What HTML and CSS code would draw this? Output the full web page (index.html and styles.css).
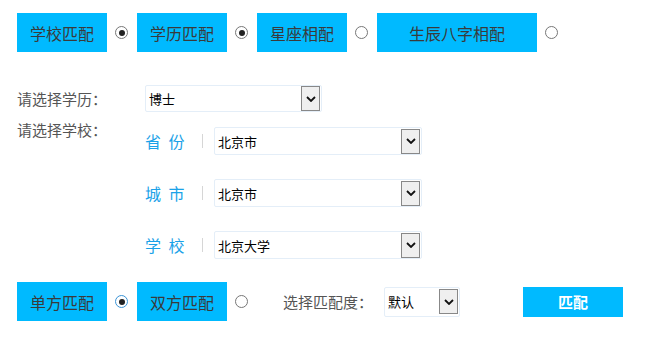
FILE: index.html
```html
<!DOCTYPE html>
<html lang="zh-CN">
<head>
    <meta charset="UTF-8">
    <title>匹配</title>
    <link rel="stylesheet" href="styles.css">
</head>
<body>
    <div class="page">
        <div class="tabs">
            <div class="tab">学校匹配</div>
            <span class="radio checked"></span>
            <div class="tab">学历匹配</div>
            <span class="radio checked"></span>
            <div class="tab">星座相配</div>
            <span class="radio"></span>
            <div class="tab tab-wide">生辰八字相配</div>
            <span class="radio"></span>
        </div>

        <div class="form-row edu-row">
            <span class="label">请选择学历：</span>
            <div class="select select-edu">
                <span class="select-text">博士</span>
                <span class="arrow"><svg viewBox="0 0 10 6"><path d="M1 1l4 4 4-4"/></svg></span>
            </div>
        </div>

        <div class="form-row school-row">
            <span class="label">请选择学校：</span>
            <div class="sub-list">
                <div class="sub-row">
                    <span class="sub-label">省 份</span>
                    <span class="divider"></span>
                    <div class="select select-wide">
                        <span class="select-text">北京市</span>
                        <span class="arrow"><svg viewBox="0 0 10 6"><path d="M1 1l4 4 4-4"/></svg></span>
                    </div>
                </div>
                <div class="sub-row">
                    <span class="sub-label">城 市</span>
                    <span class="divider"></span>
                    <div class="select select-wide">
                        <span class="select-text">北京市</span>
                        <span class="arrow"><svg viewBox="0 0 10 6"><path d="M1 1l4 4 4-4"/></svg></span>
                    </div>
                </div>
                <div class="sub-row">
                    <span class="sub-label">学 校</span>
                    <span class="divider"></span>
                    <div class="select select-wide">
                        <span class="select-text">北京大学</span>
                        <span class="arrow"><svg viewBox="0 0 10 6"><path d="M1 1l4 4 4-4"/></svg></span>
                    </div>
                </div>
            </div>
        </div>

        <div class="tabs bottom-row">
            <div class="tab">单方匹配</div>
            <span class="radio checked focus"></span>
            <div class="tab">双方匹配</div>
            <span class="radio"></span>
            <span class="label degree-label">选择匹配度：</span>
            <div class="select select-small">
                <span class="select-text">默认</span>
                <span class="arrow"><svg viewBox="0 0 10 6"><path d="M1 1l4 4 4-4"/></svg></span>
            </div>
            <div class="match-btn">匹配</div>
        </div>
    </div>
</body>
</html>
```

FILE: styles.css
```css
body {
    margin: 0;
    padding: 0;
    background: #fff;
    font-family: "Noto Sans CJK SC", "Noto Sans", sans-serif;
    color: #333;
}
.page {
    padding: 13px 0 0 17px;
}
.tabs {
    display: flex;
    align-items: center;
}
.tab {
    width: 90px;
    height: 39px;
    background: #00baff;
    color: #3a3a3a;
    font-size: 16px;
    display: flex;
    align-items: center;
    justify-content: center;
}
.tab-wide {
    width: 160px;
}
.radio {
    width: 11px;
    height: 11px;
    border: 1px solid #777;
    border-radius: 50%;
    margin: 0 9px 0 8px;
    position: relative;
    box-sizing: content-box;
    flex: none;
}
.radio.checked::after {
    content: '';
    position: absolute;
    left: 2.5px;
    top: 2.5px;
    width: 6px;
    height: 6px;
    border-radius: 50%;
    background: #222;
}
.radio.focus {
    border-color: #3b94d6;
}
.form-row {
    display: flex;
}
.label {
    font-size: 15px;
    color: #555;
    width: 128px;
    flex: none;
}
.edu-row {
    margin-top: 33px;
    align-items: center;
}
.school-row {
    margin-top: 8px;
    align-items: flex-start;
}
.school-row .label {
    line-height: 20px;
}
.sub-list {
    display: flex;
    flex-direction: column;
    gap: 24px;
    padding-top: 7px;
}
.sub-row {
    display: flex;
    align-items: center;
    height: 28px;
}
.sub-label {
    width: 57px;
    font-size: 16px;
    color: #1aa2e8;
    word-spacing: 4px;
}
.divider {
    width: 1px;
    height: 14px;
    background: #d6d6d6;
    margin-right: 11px;
}
.select {
    display: flex;
    align-items: center;
    box-sizing: border-box;
    border: 1px solid #e4eef8;
    border-radius: 2px;
    background: #fff;
    padding: 0 1px 0 3px;
}
.select-edu {
    width: 177px;
    height: 27px;
}
.select-wide {
    width: 208px;
    height: 28px;
}
.select-small {
    width: 76px;
    height: 30px;
}
.select-text {
    font-size: 13px;
    color: #000;
}
.arrow {
    margin-left: auto;
    width: 19px;
    height: 25px;
    box-sizing: border-box;
    border: 1px solid #888;
    background: #efefef;
    display: flex;
    align-items: center;
    justify-content: center;
}
.arrow svg {
    width: 10px;
    height: 6px;
    fill: none;
    stroke: #111;
    stroke-width: 1.8;
}
.bottom-row {
    margin-top: 23px;
}
.degree-label {
    width: 90px;
    margin-left: 26px;
    margin-right: 11px;
}
.match-btn {
    width: 100px;
    height: 30px;
    margin-left: 63px;
    background: #00baff;
    color: #fff;
    font-size: 15px;
    font-weight: bold;
    display: flex;
    align-items: center;
    justify-content: center;
}
```
